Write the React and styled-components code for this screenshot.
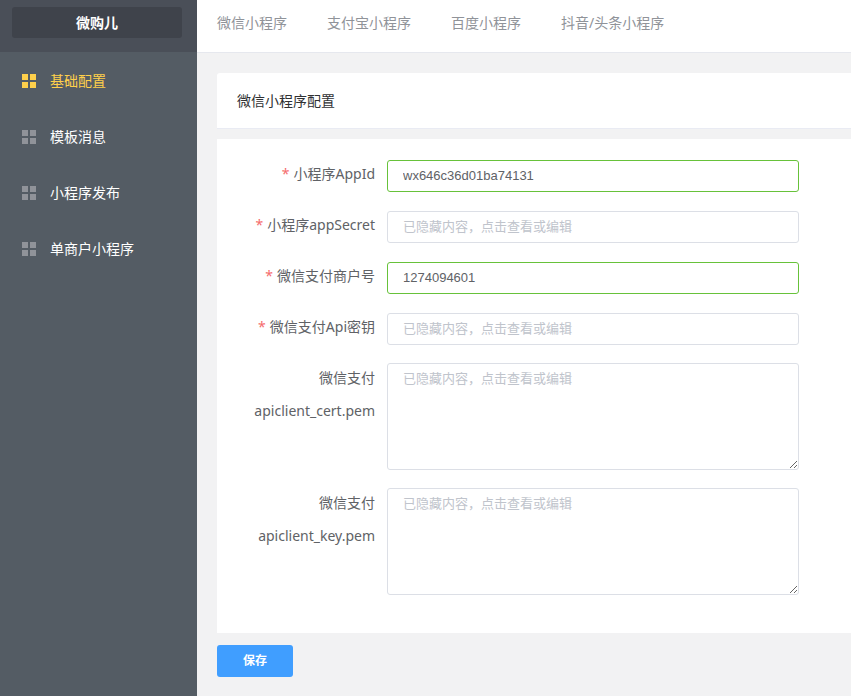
import React from 'react';
import styled, { createGlobalStyle } from 'styled-components';

const GlobalStyle = createGlobalStyle`
  html, body {
    margin: 0;
    height: 100%;
    overflow: hidden;
    background: #f2f2f3;
    font-family: "Noto Sans", "Noto Sans CJK SC", sans-serif;
    font-size: 14px;
  }
`;

const Layout = styled.div`
  display: flex;
  height: 696px;
`;

const Sidebar = styled.aside`
  width: 197px;
  flex-shrink: 0;
  background: #545c64;
`;

const Brand = styled.div`
  height: 52px;
  padding: 7px 15px 14px 12px;
  box-sizing: border-box;
  background: #4a4f58;
  margin-bottom: 1px;
`;

const BrandBox = styled.div`
  height: 31px;
  line-height: 32px;
  border-radius: 3px;
  background: #3f434b;
  color: #fff;
  font-weight: bold;
  text-align: center;
`;

const MenuItem = styled.div`
  display: flex;
  align-items: center;
  gap: 14px;
  height: 56px;
  padding-left: 22px;
  color: ${(p) => (p.$active ? '#ffd04b' : '#fff')};
`;

const MenuText = styled.span`
  line-height: 18px;
  margin-top: -1px;
`;

const MenuIcon = ({ active }) => (
  <svg width="14" height="14" viewBox="0 0 14 14" fill={active ? '#ffd04b' : '#909399'}>
    <rect x="0" y="0" width="6" height="6" />
    <rect x="8" y="0" width="6" height="6" />
    <rect x="0" y="8" width="6" height="6" />
    <rect x="8" y="8" width="6" height="6" />
  </svg>
);

const Main = styled.main`
  flex: 1;
  min-width: 0;
`;

const Tabs = styled.nav`
  display: flex;
  gap: 40px;
  padding: 0 20px 8px;
  align-items: center;
  background: #fff;
  border-bottom: 1px solid #e6e8ee;
  height: 44px;
`;

const Tab = styled.span`
  color: #909399;
`;

const Content = styled.div`
  padding: 20px 0 0 20px;
`;

const TitleCard = styled.div`
  height: 55px;
  line-height: 56px;
  padding-left: 20px;
  background: #fff;
  border-bottom: 1px solid #e9ebf3;
  border-radius: 3px 0 0 0;
  color: #303133;
`;

const FormCard = styled.form`
  margin-top: 10px;
  padding: 21px 0 38px;
  background: #fff;
`;

const Row = styled.div`
  display: flex;
  margin-bottom: ${(p) => (p.$tall ? '18px' : '19px')};
  &:last-child {
    margin-bottom: 0;
  }
`;

const Label = styled.label`
  width: 158px;
  margin-right: 12px;
  margin-top: ${(p) => (p.$tall ? '-2px' : '0')};
  flex-shrink: 0;
  text-align: right;
  line-height: ${(p) => (p.$tall ? '33px' : '28px')};
  color: #606266;
`;

const Star = styled.span`
  color: #f56c6c;
  margin-right: 4px;
`;

const Input = styled.input`
  width: 412px;
  height: 32px;
  box-sizing: border-box;
  padding: 0 15px 2px;
  border: 1px solid ${(p) => (p.$valid ? '#67c23a' : '#dcdfe6')};
  border-radius: 3px;
  outline: none;
  color: #606266;
  font: 13px "Liberation Sans", "Noto Sans CJK SC", sans-serif;

  &::placeholder {
    color: #c0c4cc;
    opacity: 1;
  }
`;

const TextArea = styled.textarea`
  display: block;
  width: 412px;
  height: 107px;
  box-sizing: border-box;
  padding: 5px 15px;
  border: 1px solid #dcdfe6;
  border-radius: 3px;
  outline: none;
  font: 13px/1.5 "Liberation Sans", "Noto Sans CJK SC", sans-serif;

  &::placeholder {
    color: #c0c4cc;
    opacity: 1;
  }
`;

const SaveButton = styled.button`
  display: block;
  width: 76px;
  height: 32px;
  margin-top: 12px;
  padding: 0 0 3px;
  border: 0;
  border-radius: 3px;
  background: #409eff;
  color: #fff;
  font: bold 12px "Liberation Sans", "Noto Sans CJK SC", sans-serif;
`;

const hidden = '已隐藏内容，点击查看或编辑';
const menu = ['基础配置', '模板消息', '小程序发布', '单商户小程序'];
const tabs = ['微信小程序', '支付宝小程序', '百度小程序', '抖音/头条小程序'];

const App = () => {
  return (
    <Layout>
      <GlobalStyle />
      <Sidebar>
        <Brand>
          <BrandBox>微购儿</BrandBox>
        </Brand>
        {menu.map((name, i) => (
          <MenuItem key={name} $active={i === 0}>
            <MenuIcon active={i === 0} />
            <MenuText>{name}</MenuText>
          </MenuItem>
        ))}
      </Sidebar>
      <Main>
        <Tabs>
          {tabs.map((name) => (
            <Tab key={name}>{name}</Tab>
          ))}
        </Tabs>
        <Content>
          <TitleCard>微信小程序配置</TitleCard>
          <FormCard>
            <Row>
              <Label><Star>*</Star>小程序AppId</Label>
              <Input $valid defaultValue="wx646c36d01ba74131" />
            </Row>
            <Row>
              <Label><Star>*</Star>小程序appSecret</Label>
              <Input placeholder={hidden} />
            </Row>
            <Row>
              <Label><Star>*</Star>微信支付商户号</Label>
              <Input $valid defaultValue="1274094601" />
            </Row>
            <Row $tall>
              <Label><Star>*</Star>微信支付Api密钥</Label>
              <Input placeholder={hidden} />
            </Row>
            <Row $tall>
              <Label $tall>微信支付<br />apiclient_cert.pem</Label>
              <TextArea placeholder={hidden} />
            </Row>
            <Row>
              <Label $tall>微信支付<br />apiclient_key.pem</Label>
              <TextArea placeholder={hidden} />
            </Row>
          </FormCard>
          <SaveButton type="button">保存</SaveButton>
        </Content>
      </Main>
    </Layout>
  );
};

export default App;
